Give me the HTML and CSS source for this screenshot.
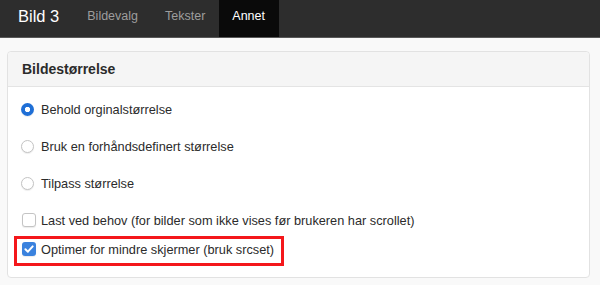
FILE: index.html
```html
<!DOCTYPE html>
<html lang="no">
<head>
  <meta charset="UTF-8">
  <meta name="viewport" content="width=device-width, initial-scale=1.0">
  <title>Bild 3</title>
  <link rel="stylesheet" href="styles.css">
</head>
<body>
  <div id="topbar">
    <div class="brand">Bild 3</div>
    <ul class="tabs">
      <li>Bildevalg</li>
      <li>Tekster</li>
      <li class="active">Annet</li>
    </ul>
  </div>
  <div id="main">
    <div class="panel">
      <div class="panel-head">Bildestørrelse</div>
      <div class="panel-body">
        <label class="row radio-row">
          <span class="radio checked"></span>
          Behold orginalstørrelse
        </label>
        <label class="row radio-row">
          <span class="radio"></span>
          Bruk en forhåndsdefinert størrelse
        </label>
        <label class="row radio-row">
          <span class="radio"></span>
          Tilpass størrelse
        </label>
        <label class="row check-row">
          <span class="check"></span>
          Last ved behov (for bilder som ikke vises før brukeren har scrollet)
        </label>
        <div class="highlight">
          <label class="row">
            <span class="check checked">
              <svg viewBox="0 0 14 14" width="14" height="14"><path d="M3.4 7.3 L5.9 9.7 L10.7 4.4" fill="none" stroke="#fff" stroke-width="2" stroke-linecap="round" stroke-linejoin="round"/></svg>
            </span>
            Optimer for mindre skjermer (bruk srcset)
          </label>
        </div>
      </div>
    </div>
  </div>
</body>
</html>
```

FILE: styles.css
```css
* {
  margin: 0;
  padding: 0;
  box-sizing: border-box;
}
li {
  list-style: none;
}
body {
  background: #f9f9f9;
  font-family: "Liberation Sans", Arial, sans-serif;
  color: #2b2b2b;
}
#topbar {
  display: flex;
  height: 38px;
  background: #2d2d2d;
  border-bottom: 1px solid #585858;
}
.brand {
  color: #fff;
  font-size: 16.5px;
  line-height: 32px;
  padding: 0 15px 0 18px;
}
.tabs {
  display: flex;
}
.tabs li {
  color: #9d9d9d;
  font-size: 12.5px;
  line-height: 32px;
  height: 37px;
  padding: 0 14px 0 13px;
}
.tabs li.active {
  color: #fff;
  background: #0a0a0a;
}
#main {
  padding: 13px 10px 0 7px;
}
.panel {
  background: #fff;
  border: 1px solid #e2e2e2;
  border-radius: 4px;
  height: 227px;
}
.panel-head {
  background: #f5f5f5;
  border-bottom: 1px solid #e4e4e4;
  border-radius: 4px 4px 0 0;
  height: 35px;
  line-height: 34px;
  padding-left: 14px;
  font-size: 14px;
  font-weight: bold;
}
.panel-body {
  padding: 12px 13px 0;
  font-size: 12.75px;
}
.row {
  display: flex;
  align-items: center;
  gap: 7px;
  height: 20px;
}
.radio-row {
  margin-bottom: 17px;
}
.check-row {
  margin-bottom: 6px;
  gap: 5px;
  padding-left: 1px;
}
.radio {
  width: 13px;
  height: 13px;
  border-radius: 50%;
  border: 1px solid #c4c4c4;
  background: #fff;
  box-shadow: 0 1px 1px rgba(0, 0, 0, 0.08);
}
.radio.checked {
  border: none;
  background: radial-gradient(circle, #fff 0 2.3px, #1f6fd6 3px);
}
.check {
  width: 14px;
  height: 14px;
  border-radius: 3px;
  border: 1px solid #c4c4c4;
  background: #fff;
  box-shadow: 0 1px 1px rgba(0, 0, 0, 0.08);
}
.check.checked {
  border: none;
  background: #3a82de;
}
.check svg {
  display: block;
}
.highlight {
  display: inline-block;
  margin-left: -7px;
  border: 3px solid #f4171b;
  padding: 0 7px 4px 5px;
}
.highlight .row {
  gap: 5px;
}
```
